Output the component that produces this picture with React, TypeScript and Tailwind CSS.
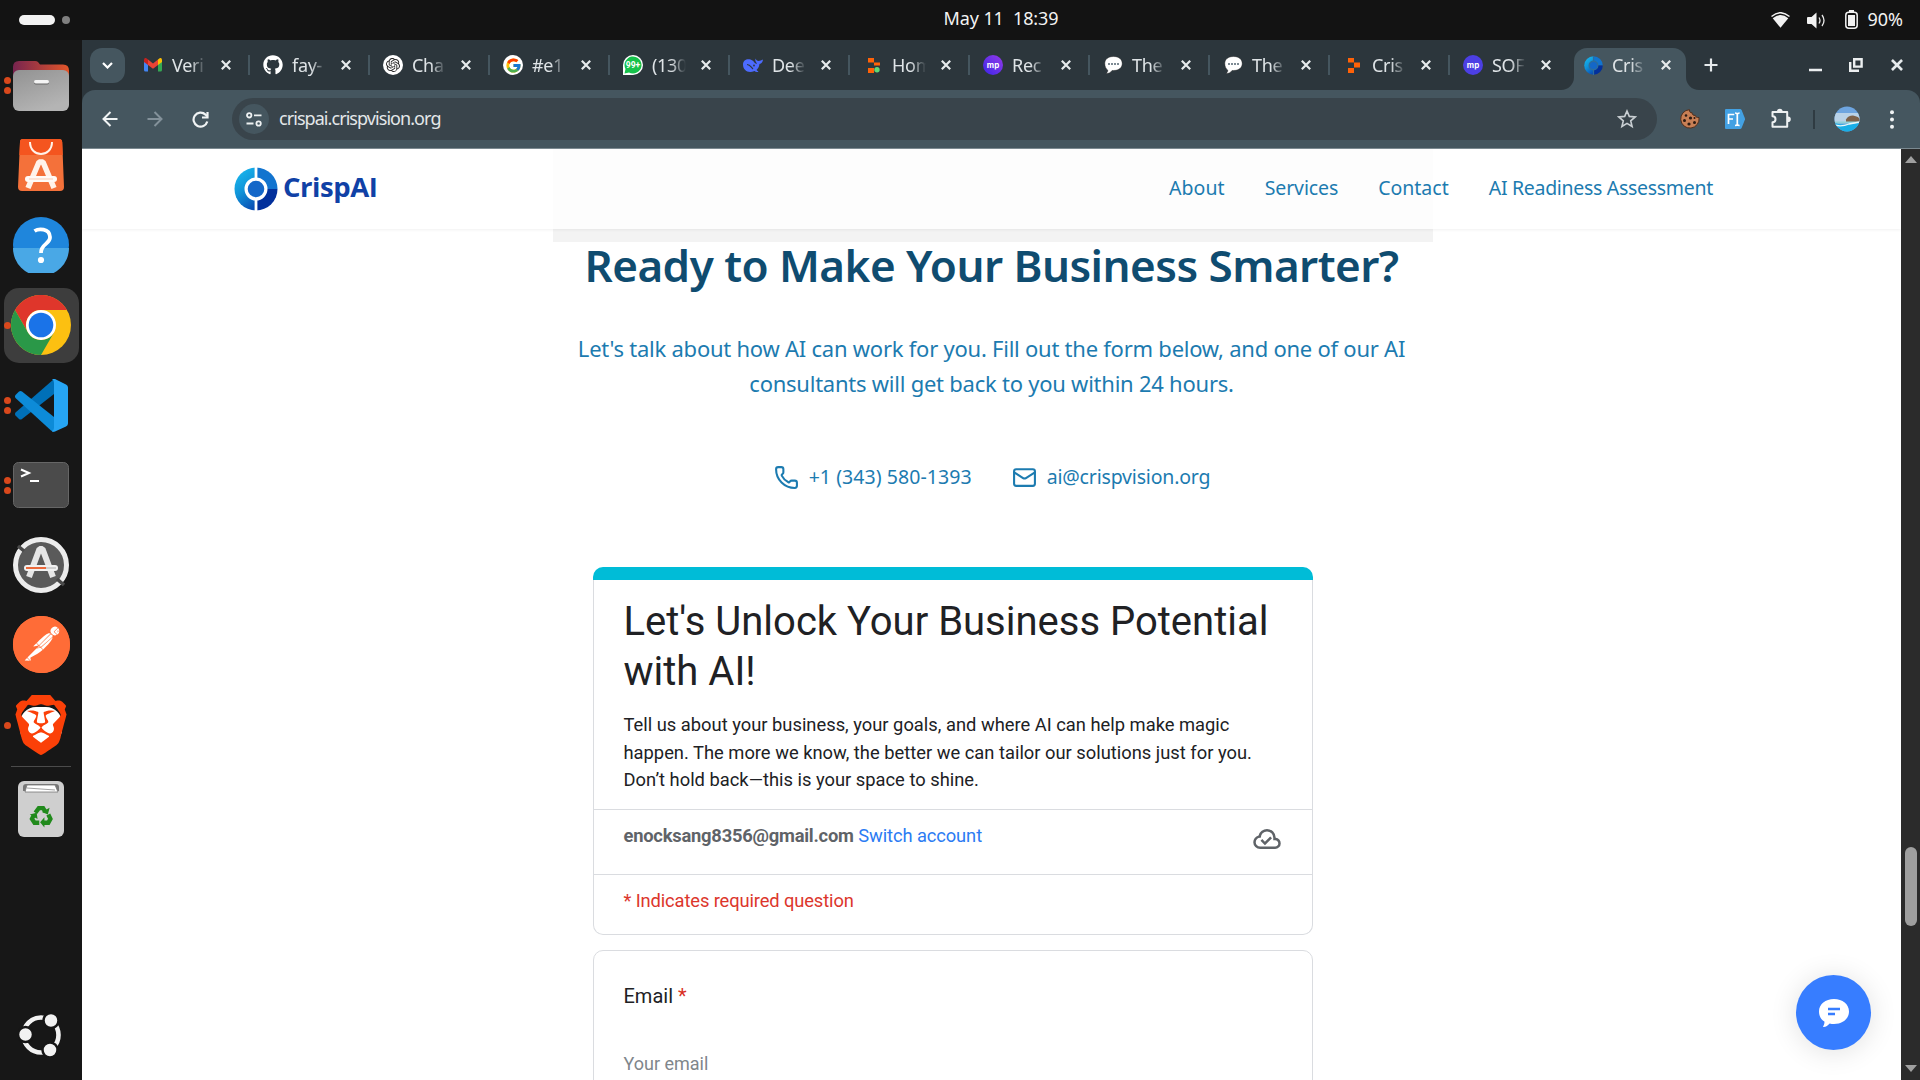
import type { ReactNode } from 'react';
import { Phone, Mail } from 'lucide-react';
import { FaGithub } from 'react-icons/fa';
import { FcGoogle } from 'react-icons/fc';
import { SiBrave, SiOpenai, SiPostman } from 'react-icons/si';

/* ---------- Dock ---------- */

function DockItem({ dots = 0, active = false, children }: { dots?: number; active?: boolean; children: ReactNode }) {
  return (
    <div className="flex h-20 w-[82px] shrink-0 items-center pl-1">
      <div
        className={
          active
            ? 'relative flex h-[75px] w-[75px] items-center justify-center rounded-[15px] bg-[#3d3d3d]'
            : 'relative flex h-[75px] w-[75px] items-center justify-center'
        }
      >
        <span className="-ml-px flex">{children}</span>
        <div className="absolute left-0 top-0 flex h-full flex-col justify-center gap-[3px]">
          {Array.from({ length: dots }, (_, i) => (
            <span key={i} className="h-[7px] w-[7px] rounded-full bg-[#d9481c]" />
          ))}
        </div>
      </div>
    </div>
  );
}

function FilesIcon() {
  return (
    <svg width="58" height="54" viewBox="0 0 58 54">
      <defs>
        <linearGradient id="fb" x1="0" x2="1">
          <stop offset="0" stopColor="#77244f" />
          <stop offset="1" stopColor="#e2562a" />
        </linearGradient>
        <linearGradient id="ff" x1="0" y1="0" x2="0.5" y2="1">
          <stop offset="0" stopColor="#929292" />
          <stop offset="1" stopColor="#b4b4b4" />
        </linearGradient>
      </defs>
      <path d="M1 9q0-6 6-6h16q2 0 3 1l2 2.500h23q6 0 6 6V30H1z" fill="url(#fb)" />
      <rect x="1" y="12" width="56" height="41" rx="6" fill="url(#ff)" />
      <rect x="22" y="23" width="15" height="3.500" rx="1.700" fill="#666" />
      <rect x="22" y="22" width="15" height="3.500" rx="1.700" fill="#f4f4f4" />
    </svg>
  );
}

function SoftwareIcon() {
  return (
    <svg width="46" height="54" viewBox="0 0 46 54">
      <path d="M5 1h36q3 0 3.200 3L46 49q0 4-4 4H4q-4 0-4-4L2 4q0-3 3-3z" fill="#f4713a" />
      <path d="M5 1h36q3 0 3.200 3l.5 13H1.400L2 4q0-3 3-3z" fill="#f4551f" />
      <path d="M12 4c0 16 22 16 22 0" fill="none" stroke="#fff3ea" strokeWidth="2" />
      <path d="M10 50 21 24h4l11 26M23 24" fill="none" stroke="#fff3ea" strokeWidth="5.500" strokeLinejoin="bevel" />
      <rect x="7" y="38" width="32" height="6" rx="3" fill="#fffaf6" />
      <path d="M11 41h24" stroke="#fbcdb5" />
    </svg>
  );
}

function HelpIcon() {
  return (
    <svg width="56" height="56" viewBox="0 0 56 56">
      <circle cx="28" cy="28" r="28" fill="#1f86dc" />
      <path d="M0 31a28 28 0 0 0 56 0z" fill="#49a8e6" />
      <path d="M21.500 14c4-2.500 15-3 15.500 6 .4 7-9.500 7-9 16" fill="none" stroke="#fff" strokeWidth="3.800" />
      <circle cx="28" cy="43" r="3.100" fill="#fff" />
    </svg>
  );
}

function ChromeIcon() {
  return (
    <svg width="60" height="60" viewBox="0 0 60 60">
      <circle cx="30" cy="30" r="30" fill="#fcc011" />
      <path d="M4 15A30 30 0 0 1 56 15H30a15 15 0 0 0-13 22.500z" fill="#df362b" />
      <path d="M4 15A30 30 0 0 0 30 60l13-22.500a15 15 0 0 1-26 0z" fill="#2a9848" />
      <circle cx="30" cy="30" r="15" fill="#fff" />
      <circle cx="30" cy="30" r="12.300" fill="#1a73e8" />
    </svg>
  );
}

function CodeIcon() {
  return (
    <svg width="53" height="53" viewBox="0 0 53 53">
      <path d="M39 0v15L7 40q-1.500 1-3 0l-3.500-3.500q-1-1.500 0-3z" fill="#0070b8" />
      <path d="M39 52.500V38L7 12.500q-1.500-1-3 0L.5 16q-1 1.500 0 3L36 51.500q1.500 1.300 3 1z" fill="#0d8bd8" />
      <path d="M37 52q2-1 2-3V4q0-3-2-4 1.500-.5 3 0l11 5.500q2 1 2 3v36q0 2-2 3l-11 5q-1.500.5-3 0z" fill="#26a5f4" />
    </svg>
  );
}

function TerminalIcon() {
  return (
    <svg width="56" height="46" viewBox="0 0 56 46">
      <rect x="0.500" y="0.500" width="55" height="45" rx="5" fill="#4b4b4b" stroke="#666" />
      <path d="m8 7.500 8 3.500-8 3.500M17 19h9" fill="none" stroke="#fff" strokeWidth="2" />
    </svg>
  );
}

function UpdaterIcon() {
  return (
    <svg width="56" height="56" viewBox="0 0 56 56">
      <circle cx="28" cy="28" r="25.500" fill="#5a5a5a" stroke="#ececec" strokeWidth="5" />
      <path d="m5 9 6 5M44 42l7 6" stroke="#4a4a4a" strokeWidth="3.500" />
      <path d="M16 40 26.500 12h3L40 40" fill="none" stroke="#e6e6e6" strokeWidth="6" strokeLinejoin="bevel" />
      <rect x="11" y="28" width="34" height="6" rx="3" fill="#f1f1f1" />
      <path d="M13 31h20" stroke="#ea5a26" strokeWidth="1.800" />
      <path d="M33 31h10" stroke="#ccc" strokeWidth="1.800" />
    </svg>
  );
}

function TrashIcon() {
  return (
    <svg width="46" height="56" viewBox="0 0 46 56">
      <rect width="46" height="56" rx="6" fill="#cfcfcf" />
      <path d="M5 10V6q0-3 3-3h30q3 0 3 3v4" fill="#777" />
      <path d="M7 11 9 4h28l3 7z" fill="#fff" stroke="#777" strokeWidth=".8" />
      <path d="M9 7l28 2" stroke="#888" strokeWidth=".8" />
      <g transform="translate(3.200 5.200) scale(.86)">
        <g fill="none" stroke="#218a1c" strokeWidth="5">
          <path d="m16.500 31 4-5.500h5l2.500 4" />
          <path d="m31.500 33 2.500 5-2.500 4.500H25" />
          <path d="M21 42.500h-5.500L12.500 38l2-4" />
        </g>
        <path d="m33 25-2 8-7-3zM27 36v12l-5-6zM10 33l8-2 1 7z" fill="#218a1c" />
      </g>
    </svg>
  );
}

function UbuntuIcon() {
  return (
    <svg width="46" height="46" viewBox="-23 -23 46 46">
      <circle r="17.500" fill="none" stroke="#f2f2f2" strokeWidth="4.600" />
      <g fill="#f2f2f2" stroke="#161616" strokeWidth="2.500">
        <circle cx="-15.500" cy="-.5" r="7.500" />
        <circle cx="10" cy="-14.500" r="7.500" />
        <circle cx="9" cy="15" r="7.500" />
      </g>
    </svg>
  );
}

function Dock() {
  return (
    <aside className="flex w-[82px] shrink-0 flex-col bg-[#171717] pt-[5px]">
      <DockItem dots={2}><FilesIcon /></DockItem>
      <DockItem><SoftwareIcon /></DockItem>
      <DockItem><HelpIcon /></DockItem>
      <DockItem dots={1} active><ChromeIcon /></DockItem>
      <DockItem dots={2}><CodeIcon /></DockItem>
      <DockItem dots={2}><TerminalIcon /></DockItem>
      <DockItem><UpdaterIcon /></DockItem>
      <DockItem>
        <span className="-mt-0.5 flex h-[57px] w-[57px] items-center justify-center rounded-full bg-[radial-gradient(white_60%,#ff6c37_61%)]">
          <SiPostman size={57} color="#ff6c37" />
        </span>
      </DockItem>
      <DockItem dots={1}>
        <span className="relative flex">
          <span className="absolute left-[9px] top-[12px] h-[38px] w-[42px] rounded-[16px] bg-white" />
          <SiBrave size={60} color="#fb4008" className="relative" />
        </span>
      </DockItem>
      <div className="ml-[11px] mt-px h-px w-[60px] bg-[#4b4b4b]" />
      <div className="ml-[18px] mt-[14px]"><TrashIcon /></div>
      <div className="ml-[18px] mt-auto pb-[22px]"><UbuntuIcon /></div>
    </aside>
  );
}

/* ---------- Favicons ---------- */

function GmailFav() {
  return (
    <svg width="20" height="20" viewBox="0 0 20 20">
      <path d="M1 5v10q0 1.500 1.500 1.500H5V7z" fill="#4285f4" />
      <path d="M15 7v9.500h2.500q1.500 0 1.500-1.500V5z" fill="#34a853" />
      <path d="M15 4.500 17 3q2-.5 2 2v2l-4 3z" fill="#fbbc04" />
      <path d="M5 4.500 3 3Q1 2.500 1 5v2l4 3z" fill="#c5221f" />
      <path d="m5 4.500 5 4 5-4V10l-5 3.800L5 10z" fill="#ea4335" />
    </svg>
  );
}

function WhatsappFav() {
  return (
    <svg width="20" height="20" viewBox="0 0 20 20">
      <path d="M0 20V10a10 10 0 1 1 10 10z" fill="#fff" />
      <path d="M1.500 18.500 2.500 14A8.500 8.500 0 1 1 6 17.500z" fill="#16c24b" />
      <text x="10" y="13.200" textAnchor="middle" fontFamily="Roboto, sans-serif" fontWeight="700" fontSize="8.500" fill="#fff">99+</text>
    </svg>
  );
}

function DeepseekFav() {
  return (
    <svg width="20" height="20" viewBox="0 0 20 20">
      <path d="M0 9.500C0 5 4 3.500 7.500 4.500c1.500.5 2.500 1 3.500 2.500 1 1.500 2 2 3 1.500C12.500 7 12 5.500 12.500 3.500c.7 1.500 1.500 2.200 3 2.500 1.500-.3 3-.5 4.500-1.500-.3 2.500-1.300 4-3.500 4.500-.3 2.500-1.500 4.500-3 6l2 1.700c-1.500.5-3 .3-4-.7C5 19 0 15 0 9.500z" fill="#4d6bfe" />
      <path d="M4 9.500c3 0 4 2.500 6 4.500" stroke="#2c373d" strokeWidth="1.200" fill="none" />
      <circle cx="11" cy="10.500" r=".9" fill="#2c373d" />
    </svg>
  );
}

function BlocksFav({ dot = false }: { dot?: boolean }) {
  return (
    <svg width="20" height="20" viewBox="0 0 20 20">
      <g fill="#ff6208">
        <rect x="5" y="3" width="6" height="4.500" />
        <rect x="5" y="13" width="6" height="5" />
        <rect x="11" y="7.500" width="6" height={dot ? 3 : 5} />
      </g>
      {dot && <circle cx="14" cy="14.800" r="2.700" fill="#5fd976" />}
    </svg>
  );
}

function MpFav({ flat = false }: { flat?: boolean }) {
  return (
    <span
      className={
        flat
          ? 'flex h-5 w-5 items-center justify-center rounded-full bg-[#4c3fe4]'
          : 'flex h-5 w-5 items-center justify-center rounded-full bg-linear-to-tr from-[#3a1fe8] to-[#9436e8]'
      }
    >
      <span className="pb-px font-['Inter',sans-serif] text-[8px] leading-none font-bold text-white">mp</span>
    </span>
  );
}

function ChatFav() {
  return (
    <svg width="20" height="20" viewBox="0 0 20 20">
      <path d="M10.500 1.500c5.500 0 8.700 3 8.700 7s-3.200 7-8.700 7H9c-1.200 2-3.500 3.200-6 3 1.500-1 2-2.200 1.700-3.500C3 13.800 1.800 11.500 1.800 8.500c0-4 3.200-7 8.700-7z" fill="#fff" stroke="#1c1c1c" strokeWidth=".4" />
      <g fill="#536570">
        <circle cx="6" cy="9" r="1" /><circle cx="9" cy="9" r="1" /><circle cx="12" cy="9" r="1" /><circle cx="15" cy="9" r="1" />
      </g>
    </svg>
  );
}

function CrispMark({ size, ring }: { size: number; ring: string }) {
  const id = 'cm' + size;
  return (
    <svg width={size} height={size} viewBox="0 0 44 44" className="shrink-0">
      <defs>
        <linearGradient id={id} x1="0.300" y1="0" x2="0.700" y2="1">
          <stop offset="0" stopColor="#19b8ee" />
          <stop offset="0.500" stopColor="#1093d8" />
          <stop offset="1" stopColor="#0a50b5" />
        </linearGradient>
      </defs>
      <path d="M22 .5a21.500 21.500 0 0 0 0 43z" fill={'url(#' + id + ')'} />
      <path d="M22 .5a21.500 21.500 0 0 1 21.500 21.500H22z" fill="#1274cf" />
      <path d="M43.500 22A21.500 21.500 0 0 1 22 43.500V22z" fill="#02309c" />
      <path d="M22 0v44" stroke={ring} strokeWidth="2.800" />
      <circle cx="22" cy="22" r="9.900" fill="#1467c8" stroke={ring} strokeWidth="3.200" />
    </svg>
  );
}

/* ---------- Browser chrome ---------- */

function CloseX({ size = 10, width = 2.2 }: { size?: number; width?: number }) {
  return (
    <svg width={size} height={size} viewBox="0 0 10 10">
      <path d="m.8.8 8.400 8.400M9.200.8.800 9.200" stroke="#e6eaec" strokeWidth={width} />
    </svg>
  );
}

const tabs: { title: string; icon: ReactNode }[] = [
  { title: 'Veri', icon: <GmailFav /> },
  { title: 'fay-', icon: <FaGithub size={20} color="#fff" /> },
  {
    title: 'Cha',
    icon: (
      <span className="flex h-5 w-5 items-center justify-center rounded-full bg-white">
        <SiOpenai size={14} color="#222" />
      </span>
    ),
  },
  {
    title: '#e1',
    icon: (
      <span className="flex h-5 w-5 items-center justify-center rounded-full bg-white">
        <FcGoogle size={17} />
      </span>
    ),
  },
  { title: '(130', icon: <WhatsappFav /> },
  { title: 'Dee', icon: <DeepseekFav /> },
  { title: 'Hom', icon: <BlocksFav dot /> },
  { title: 'Rec', icon: <MpFav /> },
  { title: 'The', icon: <ChatFav /> },
  { title: 'The', icon: <ChatFav /> },
  { title: 'Cris', icon: <BlocksFav /> },
  { title: 'SOF', icon: <MpFav flat /> },
  { title: 'Cris', icon: <CrispMark size={19} ring="#2d6d9c" /> },
];

function Tab({ title, icon, active, divider }: { title: string; icon: ReactNode; active: boolean; divider: boolean }) {
  return (
    <div className="relative flex h-[50px] w-[120px] shrink-0 items-center pl-[13px]">
      {active && (
        <>
          <div className="absolute bottom-0 left-1 h-[42px] w-[112px] rounded-t-[13px] bg-[#45565f]" />
          <svg className="absolute bottom-0 -left-[9px]" width="13" height="13" viewBox="0 0 13 13">
            <path d="M13 0v13H0A13 13 0 0 0 13 0z" fill="#45565f" />
          </svg>
          <svg className="absolute bottom-0 left-[116px]" width="13" height="13" viewBox="0 0 13 13">
            <path d="M0 0v13h13A13 13 0 0 1 0 0z" fill="#45565f" />
          </svg>
        </>
      )}
      <span className="relative flex h-5 w-5 shrink-0 items-center justify-center">{icon}</span>
      <span className="relative ml-[9px] w-[34px] overflow-hidden pb-px text-[18px] leading-[26px] tracking-[-0.300px] whitespace-nowrap text-[#dfe4e7] [mask-image:linear-gradient(90deg,#000_55%,transparent)]">
        {title}
      </span>
      <span className="relative ml-[15px] flex"><CloseX /></span>
      {divider && <span className="absolute right-0 top-[15px] h-5 w-[2px] bg-[#45565f]" />}
    </div>
  );
}

function TabStrip() {
  return (
    <div className="flex h-[50px] items-center bg-[#2c363c]">
      <div className="ml-2 flex h-[35px] w-[35px] shrink-0 items-center justify-center rounded-[12px] bg-[#45565f]">
        <svg width="11" height="7" viewBox="0 0 11 7"><path d="m1 1 4.500 4.500L10 1" fill="none" stroke="#fff" strokeWidth="2.200" /></svg>
      </div>
      <div className="ml-[5px] flex">
        {tabs.map((t, i) => (
          <Tab key={i} title={t.title} icon={t.icon} active={i === 12} divider={i < 11} />
        ))}
      </div>
      <svg className="ml-[14px] shrink-0" width="14" height="14" viewBox="0 0 14 14"><path d="M7 .5v13M.5 7h13" stroke="#e6eaec" strokeWidth="2.200" /></svg>
      <div className="ml-auto flex items-center pr-[17px]">
        <svg width="13" height="14" viewBox="0 0 13 14"><path d="M0 12h13" stroke="#eceff0" strokeWidth="2.500" /></svg>
        <svg className="ml-[27px]" width="14" height="14" viewBox="0 0 14 14" fill="none" stroke="#eceff0" strokeWidth="2.400">
          <path d="M5.200 1.200h7.400v7.400H5.200z" /><path d="M1.200 4v8.800H10" />
        </svg>
        <span className="ml-[28px] flex"><CloseX size={12} width={2.2} /></span>
      </div>
    </div>
  );
}

function Toolbar() {
  return (
    <div className="bg-[#2c363c]">
      <div className="flex h-[59px] items-center rounded-t-[13px] border-b border-[#7b8990] bg-[#45565f]">
        <svg className="ml-[20px] shrink-0" width="16" height="16" viewBox="0 0 16 16" fill="none" stroke="#f0f3f4" strokeWidth="2"><path d="M15.500 8H2M8.500 1 1.500 8l7 7" /></svg>
        <svg className="ml-[29px] shrink-0" width="16" height="16" viewBox="0 0 16 16" fill="none" stroke="#83919a" strokeWidth="2"><path d="M.5 8H14M7.500 1l7 7-7 7" /></svg>
        <svg className="ml-[29px] shrink-0" width="17" height="17" viewBox="0 0 17 17" fill="none" stroke="#f0f3f4" strokeWidth="2.200"><path d="M15.300 10.500A7 7 0 1 1 13.500 3.600L15 5.300" /><path d="M15.500 1v5.500H10" /></svg>
        <div className="ml-[23px] flex h-[42px] w-[1425px] shrink-0 items-center rounded-full bg-[#39444b] pl-[7px] pr-[20px]">
          <span className="flex h-[30px] w-[30px] items-center justify-center rounded-full bg-[#45565f]">
            <svg width="16" height="15" viewBox="0 0 16 15" fill="none" stroke="#eef1f2" strokeWidth="1.800">
              <circle cx="3.200" cy="3.300" r="2.200" /><path d="M8 3.300h7.500M.5 11.500h7" /><circle cx="12.600" cy="11.500" r="2.200" />
            </svg>
          </span>
          <span className="ml-[10px] pb-[3px] text-[18px] leading-6 tracking-[-0.940px] text-[#e3e7e9]">crispai.crispvision.org</span>
          <svg className="ml-auto" width="20" height="20" viewBox="0 0 20 20" fill="none" stroke="#c9cfd3" strokeWidth="1.600">
            <path d="m10 2 2.300 5.400 5.900.5-4.500 3.900 1.400 5.700-5.100-3.100-5.100 3.100 1.400-5.700L1.800 7.900l5.900-.5z" />
          </svg>
        </div>
        <svg className="ml-[23px] shrink-0" width="20" height="20" viewBox="0 0 20 20">
          <path d="M9.500.7c-.3 2.300 1 3.300 2.500 3 .2 2 1.500 3 3.200 2.600.3 1.700 1.700 2.400 3.800 2.200A9.200 9.200 0 1 1 9.500.7z" fill="#c87f55" stroke="#54301c" />
          <g fill="#2b1a12"><circle cx="6" cy="6.500" r="1.300" /><circle cx="10.500" cy="9" r="1.600" /><circle cx="4.500" cy="11.500" r="1.500" /><circle cx="9" cy="15" r="1.600" /><circle cx="14.500" cy="13.500" r="1.500" /><circle cx="14.500" cy="9" r="1" /></g>
        </svg>
        <svg className="ml-[25px] shrink-0" width="20" height="20" viewBox="0 0 20 20">
          <path d="M1 0h14q1 0 1.600 1L20 9.500v1L16.600 19q-.6 1-1.600 1H1q-1 0-1-1V1q0-1 1-1z" fill="#43a1e3" />
          <path d="M3.500 15V5.500h5.800M3.500 10H8M10 4q2 0 2.300 1.200Q12.600 4 14.600 4M12.300 5v10.500M10 16.500q2 0 2.300-1.200.3 1.200 2.300 1.200" fill="none" stroke="#fff" strokeWidth="1.700" />
        </svg>
        <svg className="ml-[25px] shrink-0" width="22" height="22" viewBox="0 0 22 22">
          <path d="M2.500 4h14.700v14.700H2.500v-4.500a3 3 0 0 0 0-6z" fill="none" stroke="#eef1f2" strokeWidth="2" strokeLinejoin="round" />
          <path d="M7 3.500a2.800 2.800 0 0 1 5.600 0zM18 8.500a2.800 2.800 0 0 1 0 5.600z" fill="#eef1f2" />
        </svg>
        <span className="ml-[21px] h-[19px] w-[2px] shrink-0 bg-[#2f3b42]" />
        <svg className="ml-[19px] shrink-0" width="26" height="26" viewBox="0 0 26 26">
          <defs><clipPath id="av"><circle cx="13" cy="13" r="12.500" /></clipPath></defs>
          <g clipPath="url(#av)">
            <path d="M0 0h26v26H0z" fill="#6ea5e0" />
            <path d="M0 7h26v9H0z" fill="#b9d2e8" />
            <path d="M12 13.500q2-4 7-4 6 1 7 4v3H12z" fill="#7d624a" />
            <path d="M0 15.500h26v2H0z" fill="#8fd0d8" />
            <path d="M0 17q13 4 26-1v10H0z" fill="#18aee6" />
            <path d="M0 19q8 2 15-1l11-2" stroke="#e9f6f8" fill="none" strokeWidth="1.300" />
          </g>
        </svg>
        <svg className="ml-[30px] shrink-0" width="4" height="19" viewBox="0 0 4 19" fill="#f0f3f4"><circle cx="2" cy="2.200" r="2" /><circle cx="2" cy="9.500" r="2" /><circle cx="2" cy="16.800" r="2" /></svg>
      </div>
    </div>
  );
}

function Scrollbar() {
  return (
    <div className="flex w-[19px] shrink-0 flex-col items-center bg-[#2b2b2b] pl-px pt-[7px] pb-[8px]">
      <svg width="12" height="7" viewBox="0 0 12 7"><path d="m0 7 6-7 6 7z" fill="#a0a0a0" /></svg>
      <div className="mt-[684px] h-[79px] w-[12px] rounded-full bg-[#9f9f9f]" />
      <svg className="mt-auto" width="12" height="7" viewBox="0 0 12 7"><path d="m0 0 6 7 6-7z" fill="#a0a0a0" /></svg>
    </div>
  );
}

/* ---------- Web page ---------- */

function SiteHeader() {
  return (
    <header className="relative z-10 flex h-20 shrink-0 items-center justify-between pl-[152px] pr-[188px] shadow-[0_1px_3px_rgba(0,0,0,0.060)]">
      <div className="flex items-center gap-[5px]">
        <CrispMark size={44} ring="#ffffff" />
        <span className="pb-[5px] font-['Open_Sans',sans-serif] text-[27.500px] leading-9 font-bold tracking-[-0.450px] text-[#1041a6]">CrispAI</span>
      </div>
      <nav className="flex gap-10 pb-[3px] text-[19.500px] leading-[30px] text-[#1c7bb0]">
        <a className="tracking-[0.100px]">About</a>
        <a className="tracking-[-0.120px]">Services</a>
        <a>Contact</a>
        <a className="tracking-[-0.300px]">AI Readiness Assessment</a>
      </nav>
    </header>
  );
}

function FormCards() {
  return (
    <div className="ml-[510.500px] mt-[77px] w-[720px] font-['Roboto',sans-serif] text-[18.333px] leading-[25px] text-[#202124]">
      <div className="h-[13px] rounded-t-[10px] bg-[#00bcd7]" />
      <div className="h-[355px] rounded-b-[10px] border border-t-0 border-[#dadce0]">
        <div className="px-[30px] pb-[15px] pt-[17px]">
          <h3 className="text-[40px] leading-[50px]">Let's Unlock Your Business Potential<br />with AI!</h3>
          <p className="mt-[14px] leading-[27.500px]">
            Tell us about your business, your goals, and where AI can help make magic<br />
            happen. The more we know, the better we can tailor our solutions just for you.<br />
            Don’t hold back—this is your space to shine.
          </p>
        </div>
        <div className="flex h-[65px] items-start justify-between border-t border-[#dadce0] px-[30px] pt-[13px]">
          <p className="whitespace-pre">
            <span className="font-bold tracking-[-0.220px] text-[#5f6368]">enocksang8356@gmail.com</span>{' '}
            <span className="tracking-[-0.100px] text-[#2b7bf3]">Switch account</span>
          </p>
          <svg className="mt-px" width="30" height="30" viewBox="0 -960 960 960" fill="#5f6368">
            <path d="m414-280 226-226-58-58-169 169-84-84-57 57 142 142ZM260-160q-91 0-155.500-63T40-377q0-78 47-139t123-78q25-92 100-149t170-57q117 0 198.500 81.500T760-520q69 8 114.500 59.500T920-340q0 75-52.500 127.500T740-160H260Zm0-80h480q42 0 71-29t29-71q0-42-29-71t-71-29h-60v-80q0-83-58.500-141.500T480-720q-83 0-141.500 58.500T280-520h-20q-58 0-99 41t-41 99q0 58 41 99t99 41Z" />
          </svg>
        </div>
        <p className="border-t border-[#dadce0] px-[30px] pt-[13px] tracking-[-0.120px] text-[#dc362c]">* Indicates required question</p>
      </div>
      <div className="mt-[15px] h-[400px] rounded-[10px] border border-[#dadce0] px-[30px] pt-[30px]">
        <p className="text-[20px] leading-[30px]">Email <span className="text-[#d93025]">*</span></p>
        <p className="mt-[40px] text-[18px] text-[#80868b]">Your email</p>
      </div>
    </div>
  );
}

function Page() {
  return (
    <div className="relative flex min-h-0 flex-1 flex-col overflow-hidden bg-white">
      <div className="absolute left-[471px] top-0 h-20 w-[880px] bg-[#fdfdfd]" />
      <SiteHeader />
      <section className="flex flex-col text-center text-[#1c7bb0]">
        <div className="ml-[471px] h-[13px] w-[880px] shrink-0 bg-[#f3f3f3]" />
        <h2 className="-mt-[2px] text-[44px] leading-[50px] font-semibold tracking-[-0.530px] text-[#0f4c70]">Ready to Make Your Business Smarter?</h2>
        <p className="mt-[41px] text-[22px] leading-[35px] tracking-[-0.240px]">
          Let's talk about how AI can work for you. Fill out the form below, and one of our AI<br />
          consultants will get back to you within 24 hours.
        </p>
        <div className="mt-[62px] flex items-center justify-center gap-10 pl-px text-[19.500px] leading-7">
          <span className="flex items-center gap-[10px]"><Phone size={25} /><span className="tracking-[0.060px]">+1 (343) 580-1393</span></span>
          <span className="flex items-center gap-[10px]"><Mail size={25} /><span className="tracking-[-0.180px]">ai@crispvision.org</span></span>
        </div>
      </section>
      <div className="-mt-px"><FormCards /></div>
      <div className="absolute bottom-[30px] right-[30px] flex h-[75px] w-[75px] items-center justify-center rounded-full bg-[#377dff] shadow-[0_2px_28px_rgba(0,0,0,0.120)]">
        <svg width="30" height="28" viewBox="0 0 30 28">
          <path d="M15 0c8.500 0 15 5.200 15 12.500S23.500 25 15 25c-1.500 0-3-.1-4.300-.5C9 26.500 7 27.800 4.600 28c-.6 0-.7-.6-.3-1 .8-1 1.300-2.600 1.100-4.500C2 20.500 0 17 0 12.500 0 5.200 6.500 0 15 0z" fill="#fff" />
          <path d="M9 10h12M9 15h7" stroke="#377dff" strokeWidth="2.500" />
        </svg>
      </div>
    </div>
  );
}

function TopBar() {
  return (
    <div className="flex h-10 shrink-0 items-center bg-[#131313] text-[18px] leading-6 text-[#f2f2f2]">
      <div className="flex flex-1 items-center gap-[7px] pl-[19px]">
        <span className="h-[10px] w-9 rounded-full bg-[#f2f2f2]" />
        <span className="h-2 w-2 rounded-full bg-[#808080]" />
      </div>
      <span className="ml-[80px] pb-[4px] whitespace-pre tracking-[-0.100px]">May 11  18:39</span>
      <div className="flex flex-1 items-center justify-end pr-[17px]">
        <svg width="19" height="16" viewBox="0 0 19 16">
          <path d="M.5 4.500Q9.500-3 18.500 4.500" fill="none" stroke="#f2f2f2" strokeWidth="1.500" />
          <path d="M1.700 6.200Q9.500-.2 17.300 6.200L9.500 15.800z" fill="#f2f2f2" />
        </svg>
        <svg className="ml-[17px]" width="19" height="17" viewBox="0 0 19 17">
          <path d="M1 5h3.500L9.500.5v16L4.500 12H1q-1 0-1-1V6q0-1 1-1z" fill="#f2f2f2" />
          <path d="M12 5.500q2 3 0 6M15 3q4 5.500 0 11" fill="none" stroke="#e8e8e8" strokeWidth="1.300" />
        </svg>
        <svg className="-mt-px ml-[19px]" width="13" height="19" viewBox="0 0 13 19">
          <rect x=".8" y="2.200" width="11.400" height="16" rx="3" fill="none" stroke="#f2f2f2" strokeWidth="1.500" />
          <path d="M4 0h5v2H4zM3 5h7v11H3z" fill="#f2f2f2" />
        </svg>
        <span className="ml-[9px] pb-[3px]">90%</span>
      </div>
    </div>
  );
}

export default function App() {
  return (
    <div className="flex h-[1080px] w-[1920px] flex-col overflow-hidden bg-[#131313] font-['Noto_Sans',sans-serif]">
      <TopBar />
      <div className="flex min-h-0 flex-1">
        <Dock />
        <div className="flex min-w-0 flex-1 flex-col">
          <TabStrip />
          <Toolbar />
          <div className="flex min-h-0 flex-1">
            <Page />
            <Scrollbar />
          </div>
        </div>
      </div>
    </div>
  );
}
